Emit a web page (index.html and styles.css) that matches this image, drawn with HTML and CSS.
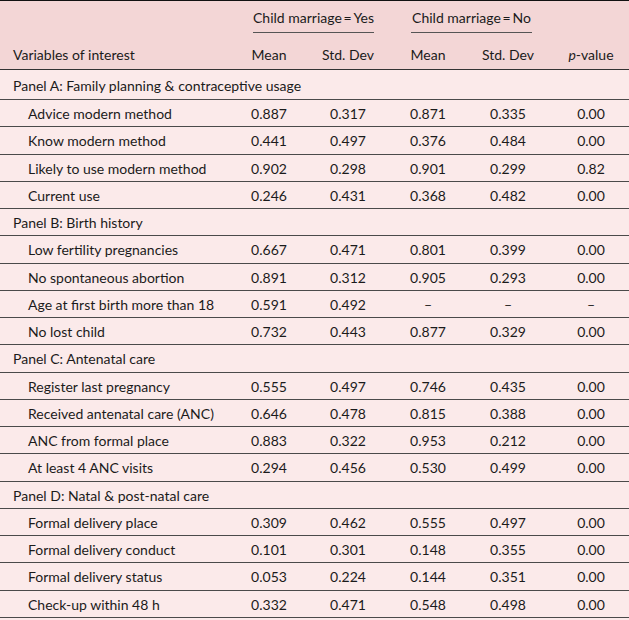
FILE: index.html
```html
<!DOCTYPE html>
<html>
<head>
<meta charset="utf-8">
<link rel="stylesheet" href="styles.css">
</head>
<body>
<div class="table">
  <div class="head">
    <div class="hrow span-row">
      <div class="cell first"></div>
      <div class="spancell"><span class="spanlabel">Child marriage&thinsp;=&thinsp;Yes</span></div>
      <div class="spancell"><span class="spanlabel">Child marriage&thinsp;=&thinsp;No</span></div>
      <div class="cell"></div>
    </div>
    <div class="hrow col-row">
      <div class="cell first">Variables of interest</div>
      <div class="cell num">Mean</div>
      <div class="cell num">Std. Dev</div>
      <div class="cell num">Mean</div>
      <div class="cell num">Std. Dev</div>
      <div class="cell num last"><i>p</i>-value</div>
    </div>
  </div>

  <div class="row panel top-panel"><div class="cell first wide">Panel A: Family planning &amp; contraceptive usage</div></div>
  <div class="row"><div class="cell first ind">Advice modern method</div><div class="cell num">0.887</div><div class="cell num">0.317</div><div class="cell num">0.871</div><div class="cell num">0.335</div><div class="cell num last">0.00</div></div>
  <div class="row"><div class="cell first ind">Know modern method</div><div class="cell num">0.441</div><div class="cell num">0.497</div><div class="cell num">0.376</div><div class="cell num">0.484</div><div class="cell num last">0.00</div></div>
  <div class="row"><div class="cell first ind">Likely to use modern method</div><div class="cell num">0.902</div><div class="cell num">0.298</div><div class="cell num">0.901</div><div class="cell num">0.299</div><div class="cell num last">0.82</div></div>
  <div class="row"><div class="cell first ind">Current use</div><div class="cell num">0.246</div><div class="cell num">0.431</div><div class="cell num">0.368</div><div class="cell num">0.482</div><div class="cell num last">0.00</div></div>

  <div class="row panel"><div class="cell first wide">Panel B: Birth history</div></div>
  <div class="row"><div class="cell first ind">Low fertility pregnancies</div><div class="cell num">0.667</div><div class="cell num">0.471</div><div class="cell num">0.801</div><div class="cell num">0.399</div><div class="cell num last">0.00</div></div>
  <div class="row"><div class="cell first ind">No spontaneous abortion</div><div class="cell num">0.891</div><div class="cell num">0.312</div><div class="cell num">0.905</div><div class="cell num">0.293</div><div class="cell num last">0.00</div></div>
  <div class="row"><div class="cell first ind">Age at first birth more than 18</div><div class="cell num">0.591</div><div class="cell num">0.492</div><div class="cell num">–</div><div class="cell num">–</div><div class="cell num last">–</div></div>
  <div class="row"><div class="cell first ind">No lost child</div><div class="cell num">0.732</div><div class="cell num">0.443</div><div class="cell num">0.877</div><div class="cell num">0.329</div><div class="cell num last">0.00</div></div>

  <div class="row panel"><div class="cell first wide">Panel C: Antenatal care</div></div>
  <div class="row"><div class="cell first ind">Register last pregnancy</div><div class="cell num">0.555</div><div class="cell num">0.497</div><div class="cell num">0.746</div><div class="cell num">0.435</div><div class="cell num last">0.00</div></div>
  <div class="row"><div class="cell first ind">Received antenatal care (ANC)</div><div class="cell num">0.646</div><div class="cell num">0.478</div><div class="cell num">0.815</div><div class="cell num">0.388</div><div class="cell num last">0.00</div></div>
  <div class="row"><div class="cell first ind">ANC from formal place</div><div class="cell num">0.883</div><div class="cell num">0.322</div><div class="cell num">0.953</div><div class="cell num">0.212</div><div class="cell num last">0.00</div></div>
  <div class="row"><div class="cell first ind">At least 4 ANC visits</div><div class="cell num">0.294</div><div class="cell num">0.456</div><div class="cell num">0.530</div><div class="cell num">0.499</div><div class="cell num last">0.00</div></div>

  <div class="row panel"><div class="cell first wide">Panel D: Natal &amp; post-natal care</div></div>
  <div class="row"><div class="cell first ind">Formal delivery place</div><div class="cell num">0.309</div><div class="cell num">0.462</div><div class="cell num">0.555</div><div class="cell num">0.497</div><div class="cell num last">0.00</div></div>
  <div class="row"><div class="cell first ind">Formal delivery conduct</div><div class="cell num">0.101</div><div class="cell num">0.301</div><div class="cell num">0.148</div><div class="cell num">0.355</div><div class="cell num last">0.00</div></div>
  <div class="row"><div class="cell first ind">Formal delivery status</div><div class="cell num">0.053</div><div class="cell num">0.224</div><div class="cell num">0.144</div><div class="cell num">0.351</div><div class="cell num last">0.00</div></div>
  <div class="row"><div class="cell first ind">Check-up within 48 h</div><div class="cell num">0.332</div><div class="cell num">0.471</div><div class="cell num">0.548</div><div class="cell num">0.498</div><div class="cell num last">0.00</div></div>
</div>
</body>
</html>
```

FILE: styles.css
```css
html, body {
  margin: 0;
  padding: 0;
  background: #fbeaea;
}
body {
  font-family: "Lato", "Noto Sans", sans-serif;
  font-size: 14px;
  color: #1b1b1b;
}
.table {
  width: 629px;
}
.head {
  background: #f3d6d6;
  border-top: 1px solid #111;
  border-bottom: 1px solid #333;
}
.hrow, .row {
  display: grid;
  grid-template-columns: 240px 58px 100px 60px 100px 71px;
  align-items: center;
}
.span-row {
  height: 37px;
  grid-template-columns: 240px 158px 160px 71px;
}
.spancell {
  align-self: stretch;
  display: flex;
  align-items: flex-end;
  padding-left: 13px;
}
.spanlabel {
  display: inline-block;
  width: 121px;
  text-align: center;
  line-height: 20px;
  padding-bottom: 4px;
  border-bottom: 1px solid #555;
  white-space: nowrap;
  margin-bottom: 5px;
}
.col-row {
  height: 31px;
  padding-top: 2px;
  box-sizing: border-box;
}
.row {
  height: 27.25px;
  padding-top: 2px;
  box-sizing: border-box;
  border-bottom: 1px solid #4a4a4a;
}
.top-panel {
  height: 30px;
  padding-top: 3px;
}
.cell {
  line-height: 20px;
  white-space: nowrap;
}
.first {
  padding-left: 13px;
}
.ind {
  padding-left: 28px;
}
.wide {
  grid-column: 1 / -1;
}
.num {
  text-align: center;
}
.last {
  padding-right: 5px;
}
```
